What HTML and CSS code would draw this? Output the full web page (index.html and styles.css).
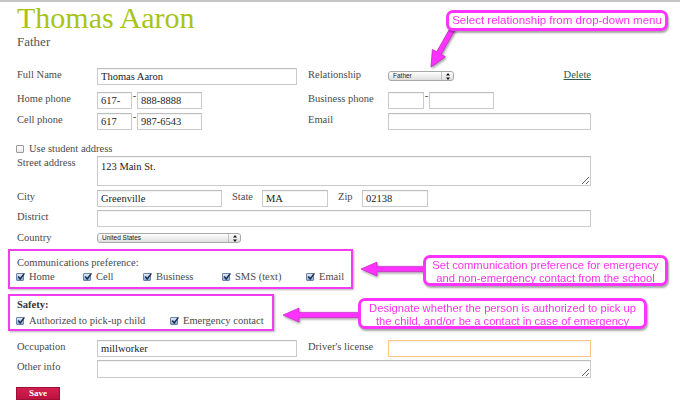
FILE: index.html
```html
<!DOCTYPE html>
<html>
<head>
<meta charset="utf-8">
<link rel="stylesheet" href="styles.css">
</head>
<body>
<div class="screen">
  <div class="topline"></div>
  <div class="page">
    <h1 class="name">Thomas Aaron</h1>
    <div class="role">Father</div>
    <form class="form">
      <div class="row h24">
        <label>Full Name</label>
        <input class="text w200" value="Thomas Aaron">
        <label>Relationship</label>
        <div class="relcell">
          <div class="select sel-rel"><span class="val">Father</span><span class="arr"><svg width="4" height="7" viewBox="0 0 4 7"><path d="M2 0 L4 2.6 L0 2.6 Z M2 7 L4 4.4 L0 4.4 Z" fill="#111"/></svg></span></div>
          <a class="delete" href="#">Delete</a>
        </div>
      </div>
      <div class="row h21">
        <label>Home phone</label>
        <div class="phone"><input class="text w35" value="617-"><span class="dash">-</span><input class="text w65" value="888-8888"></div>
        <label>Business phone</label>
        <div class="phone"><input class="text w36" value=""><span class="dash">-</span><input class="text w65" value=""></div>
      </div>
      <div class="row h28">
        <label>Cell phone</label>
        <div class="phone"><input class="text w35" value="617"><span class="dash">-</span><input class="text w65" value="987-6543"></div>
        <label>Email</label>
        <input class="text w203" value="">
      </div>
      <div class="checkline h15">
        <span class="cb"></span><span>Use student address</span>
      </div>
      <div class="row h34">
        <label>Street address</label>
        <textarea class="text area span3 street">123 Main St.</textarea>
      </div>
      <div class="row h20">
        <label>City</label>
        <div class="cityline span3">
          <input class="text w125" value="Greenville">
          <label class="inl w30">State</label>
          <input class="text w66" value="MA">
          <label class="inl w24">Zip</label>
          <input class="text w66" value="02138">
        </div>
      </div>
      <div class="row h21">
        <label>District</label>
        <input class="text span3 w494" value="">
      </div>
      <div class="row h18">
        <label>Country</label>
        <div class="select sel-country"><span class="val">United States</span><span class="arr"><svg width="4" height="7" viewBox="0 0 4 7"><path d="M2 0 L4 2.6 L0 2.6 Z M2 7 L4 4.4 L0 4.4 Z" fill="#111"/></svg></span></div>
      </div>

      <div class="box comms">
        <div class="boxtitle">Communications preference:</div>
        <div class="opts comms-opts">
          <span class="opt"><span class="cb on"><svg viewBox="0 0 8 8" width="8" height="8"><path d="M1.2 3.6 L3.2 6 L7.4 0.4" fill="none" stroke="#1d2c52" stroke-width="1.5"/></svg></span>Home</span>
          <span class="opt"><span class="cb on"><svg viewBox="0 0 8 8" width="8" height="8"><path d="M1.2 3.6 L3.2 6 L7.4 0.4" fill="none" stroke="#1d2c52" stroke-width="1.5"/></svg></span>Cell</span>
          <span class="opt"><span class="cb on"><svg viewBox="0 0 8 8" width="8" height="8"><path d="M1.2 3.6 L3.2 6 L7.4 0.4" fill="none" stroke="#1d2c52" stroke-width="1.5"/></svg></span>Business</span>
          <span class="opt"><span class="cb on"><svg viewBox="0 0 8 8" width="8" height="8"><path d="M1.2 3.6 L3.2 6 L7.4 0.4" fill="none" stroke="#1d2c52" stroke-width="1.5"/></svg></span>SMS (text)</span>
          <span class="opt"><span class="cb on"><svg viewBox="0 0 8 8" width="8" height="8"><path d="M1.2 3.6 L3.2 6 L7.4 0.4" fill="none" stroke="#1d2c52" stroke-width="1.5"/></svg></span>Email</span>
        </div>
      </div>

      <div class="box safety">
        <div class="boxtitle bold">Safety:</div>
        <div class="opts safety-opts">
          <span class="opt"><span class="cb on"><svg viewBox="0 0 8 8" width="8" height="8"><path d="M1.2 3.6 L3.2 6 L7.4 0.4" fill="none" stroke="#1d2c52" stroke-width="1.5"/></svg></span>Authorized to pick-up child</span>
          <span class="opt"><span class="cb on"><svg viewBox="0 0 8 8" width="8" height="8"><path d="M1.2 3.6 L3.2 6 L7.4 0.4" fill="none" stroke="#1d2c52" stroke-width="1.5"/></svg></span>Emergency contact</span>
        </div>
      </div>

      <div class="row h20 occ">
        <label>Occupation</label>
        <input class="text w200" value="millworker">
        <label>Driver's license</label>
        <input class="text w203 focus" value="">
      </div>
      <div class="row h18">
        <label>Other info</label>
        <textarea class="text area span3 other"></textarea>
      </div>
      <button type="button" class="save">Save</button>
    </form>
  </div>

  <svg class="arrows" width="680" height="409" viewBox="0 0 680 409">
    <defs>
      <filter id="sh" x="-20%" y="-50%" width="140%" height="200%">
        <feDropShadow dx="1" dy="1.5" stdDeviation="1" flood-color="#000" flood-opacity="0.4"/>
      </filter>
    </defs>
    <g fill="#ff33ff" stroke="#b41ab4" stroke-width="0.6" filter="url(#sh)">
      <path transform="translate(431,67) rotate(-60.4)" d="M0 0 L16 -7.5 L16 -2.6 L44 -2.6 L44 2.6 L16 2.6 L16 7.5 Z"/>
      <path transform="translate(361,269)" d="M0 0 L16 -7 L16 -2.6 L66 -2.6 L66 2.6 L16 2.6 L16 7 Z"/>
      <path transform="translate(283,315)" d="M0 0 L16 -7 L16 -2.6 L78 -2.6 L78 2.6 L16 2.6 L16 7 Z"/>
    </g>
  </svg>

  <div class="callout c1">Select relationship from drop-down menu</div>
  <div class="callout c2">Set communication preference for emergency<br>and non-emergency contact from the school</div>
  <div class="callout c3">Designate whether the person is authorized to pick up<br>the child, and/or be a contact in case of emergency</div>
</div>
</body>
</html>
```

FILE: styles.css
```css
html, body {
  margin: 0;
  padding: 0;
  background: #fff;
}
body {
  font-family: "Liberation Serif", "Times New Roman", serif;
  color: #4a4a4a;
}
.screen {
  position: relative;
  width: 680px;
  height: 409px;
  overflow: hidden;
}
.topline {
  height: 2px;
  background: #c6c6c6;
}
.page {
  padding-left: 17px;
}
.name {
  margin: 1px 0 0;
  font-size: 30px;
  line-height: 30px;
  font-weight: normal;
  color: #a7c416;
}
.role {
  margin-top: 1px;
  font-size: 13px;
  line-height: 16px;
  color: #555;
}
.form {
  margin: 18px 0 0;
  font-size: 10.5px;
}
.row {
  display: grid;
  grid-template-columns: 80px 211px 80px 203px;
  align-items: start;
}
.row > label, .inl {
  line-height: 14px;
  color: #4a4a4a;
}
.h15 { height: 15px; }
.h18 { height: 18px; }
.h20 { height: 20px; }
.h21 { height: 21px; }
.h24 { height: 24px; }
.h28 { height: 28px; }
.h34 { height: 34px; }

.text {
  box-sizing: border-box;
  height: 17px;
  margin: 0;
  border: 1px solid #cbcbcb;
  border-top-color: #bdbdbd;
  padding: 0 3px;
  font: 10.5px "Liberation Serif", "Times New Roman", serif;
  color: #222;
  background: #fff;
  box-shadow: inset 0 1px 1px rgba(0,0,0,0.05);
  outline: none;
}
.w35 { width: 35px; }
.w36 { width: 36px; }
.w65 { width: 65px; }
.w66 { width: 66px; }
.w125 { width: 125px; }
.w200 { width: 200px; }
.w203 { width: 203px; }
.w494 { width: 494px; }
.span3 { grid-column: 2 / span 3; }
.focus { border-color: #f8c584; }

.area {
  width: 494px;
  padding: 3px 3px;
  resize: both;
  line-height: 13px;
}
.street { height: 30px; }
.other { height: 18px; }

.phone {
  display: flex;
  align-items: flex-start;
}
.dash {
  width: 5px;
  text-align: center;
  line-height: 7px;
  color: #444;
}

.relcell {
  display: flex;
  justify-content: space-between;
  align-items: flex-start;
}
.delete {
  line-height: 14px;
  color: #2d5a52;
  text-decoration: underline;
}

.select {
  box-sizing: border-box;
  display: flex;
  align-items: stretch;
  height: 10px;
  border: 1px solid #a8a8a8;
  border-radius: 3px;
  background: linear-gradient(#ffffff, #dedede);
  font: 6.5px "Liberation Sans", Arial, sans-serif;
  color: #222;
}
.select .val {
  flex: 1;
  padding-left: 4px;
  line-height: 8px;
}
.select .arr {
  width: 11px;
  border-left: 1px solid #c2c2c2;
  display: flex;
  align-items: center;
  justify-content: center;
}
.sel-rel {
  width: 66px;
  margin-top: 3px;
}
.sel-country {
  width: 144px;
  margin-top: 2px;
}

.cityline {
  display: flex;
  align-items: flex-start;
}
.inl {
  margin-left: 10px;
}
.w30 { width: 30px; }
.w24 { width: 24px; }

.checkline {
  display: flex;
  align-items: center;
  line-height: 15px;
  margin-left: -1px;
}
.cb {
  box-sizing: border-box;
  display: inline-flex;
  width: 8px;
  height: 8px;
  border: 1px solid #9a9a9a;
  border-radius: 1px;
  background: linear-gradient(#fff, #e8e8e8);
  margin-right: 5px;
  flex: none;
  position: relative;
}
.cb svg {
  position: absolute;
  left: 0;
  top: -1px;
  overflow: visible;
}
.cb.on {
  border-color: #6b84a6;
  background: linear-gradient(#e2ecf8, #86acd8);
}

.box {
  box-sizing: border-box;
  margin-left: -9px;
  border: 2px solid #f23cf0;
  box-shadow: 1px 1px 2px rgba(0,0,0,0.3);
  padding-left: 7px;
}
.comms {
  width: 345px;
  padding-top: 5px;
  padding-bottom: 3px;
}
.safety {
  width: 266px;
  margin-top: 5px;
  padding-top: 1px;
  padding-bottom: 1px;
}
.boxtitle {
  line-height: 14px;
}
.safety .boxtitle {
  line-height: 15px;
}
.bold {
  font-weight: bold;
  color: #333;
}
.opts {
  display: grid;
  margin-left: -1px;
  line-height: 14px;
}
.safety-opts {
  margin-top: 2px;
  grid-template-columns: 154px auto;
}
.comms-opts {
  grid-template-columns: 67px 60px 79px 84px auto;
}
.opt {
  display: flex;
  align-items: center;
}

.occ {
  margin-top: 9px;
}
.save {
  display: block;
  box-sizing: border-box;
  margin: 9px 0 0 -1px;
  width: 44px;
  height: 13px;
  padding: 0;
  border: 1px solid #9c0f36;
  background: linear-gradient(#d2204f, #bd1240);
  color: #fff;
  font: bold 9px "Liberation Serif", "Times New Roman", serif;
  line-height: 11px;
}

.arrows {
  position: absolute;
  left: 0;
  top: 0;
  pointer-events: none;
}
.callout {
  position: absolute;
  box-sizing: border-box;
  background: #fff;
  border: 3px solid #ff33ff;
  border-radius: 7px;
  box-shadow: 1px 2px 2px rgba(0,0,0,0.35);
  color: #ff33ee;
  font: 11.2px "Liberation Sans", Arial, sans-serif;
  text-align: center;
  white-space: nowrap;
}
.c1 {
  left: 446px;
  top: 10px;
  width: 222px;
  height: 21px;
  line-height: 15px;
  font-size: 11.5px;
}
.c2 {
  left: 423px;
  top: 255px;
  width: 245px;
  height: 31px;
  line-height: 13px;
  padding-top: 1px;
}
.c3 {
  left: 358px;
  top: 298px;
  width: 289px;
  height: 31px;
  line-height: 13px;
  padding-top: 1px;
}
```
